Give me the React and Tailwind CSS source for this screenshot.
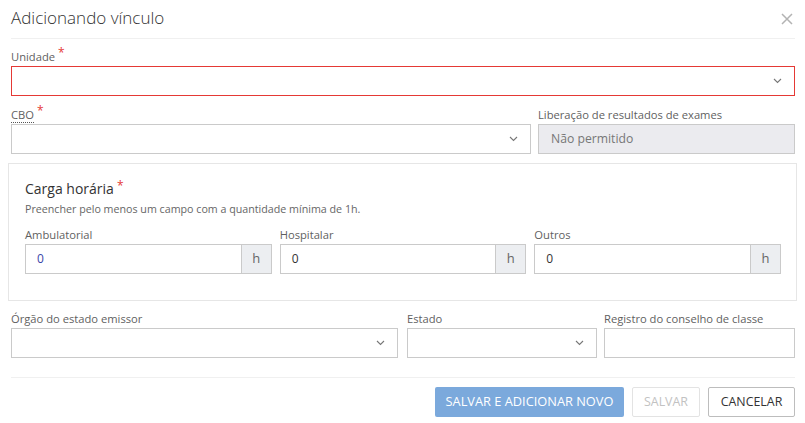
import React from "react";

const Chevron = () => (
  <svg width="9" height="6" viewBox="0 0 9 6" className="shrink-0">
    <path d="M1 1 L4.5 4.5 L8 1" fill="none" stroke="#777" strokeWidth="1.1" />
  </svg>
);

const Star = () => (
  <span className="text-[#e53935] text-[12px] leading-none relative -top-[4px] ml-[3px]">*</span>
);

const Label = ({ children, className = "" }) => (
  <div className={"text-[11.2px] leading-[16px] text-[#5f5f5f] mb-[1px] whitespace-nowrap " + className}>{children}</div>
);

const Select = ({ red }) => (
  <div
    className={
      "h-[30px] flex items-center justify-end pr-[12px] bg-white border " +
      (red ? "border-[#e53935]" : "border-[#cacaca]")
    }
  >
    <Chevron />
  </div>
);

const HourInput = ({ label, blue }) => (
  <div className="flex-1 min-w-0">
    <Label>{label}</Label>
    <div className="h-[30px] flex border border-[#cacaca]">
      <div className={"flex-1 flex items-center pl-[11px] text-[12px] " + (blue ? "text-[#3a44a8]" : "text-[#333]")}>0</div>
      <div className="w-[30px] flex items-center justify-center bg-[#eceef1] border-l border-[#cacaca] text-[13px] text-[#666]">h</div>
    </div>
  </div>
);

export default function App() {
  return (
    <div className="w-[805px] h-[423px] bg-white overflow-hidden" style={{ fontFamily: '"Open Sans", "Liberation Sans", sans-serif' }}>
      <div className="pl-[11px] pr-[10px]">
        <div className="h-[39px] flex items-center justify-between border-b border-[#f0f0f0]">
          <div className="text-[17px] font-light text-[#333] -mt-[3px]">Adicionando vínculo</div>
          <svg width="12" height="12" viewBox="0 0 12 12" className="mr-[2px] -mt-[1px]">
            <path d="M1 1 L11 11 M11 1 L1 11" stroke="#b3b3b3" strokeWidth="1.5" />
          </svg>
        </div>

        <div className="pt-[10px]">
          <Label>Unidade<Star /></Label>
          <Select red />
        </div>

        <div className="mt-[11px] flex gap-[7px]">
          <div className="w-[520px]">
            <Label><span className="border-b border-dotted border-[#555]">CBO</span><Star /></Label>
            <Select />
          </div>
          <div className="flex-1">
            <Label>Liberação de resultados de exames</Label>
            <div className="h-[30px] flex items-center pl-[12px] bg-[#ebebef] border border-[#cacaca] text-[12.2px] text-[#777]">
              Não permitido
            </div>
          </div>
        </div>

        <div className="mt-[9px] -ml-[3px] -mr-[2px] border border-[#e6e6e6] pl-[16px] pr-[15px] pt-[15px] pb-[26px]">
          <div className="text-[14px] leading-[20px] text-[#333]">Carga horária<Star /></div>
          <div className="text-[10.7px] leading-[16px] text-[#666] mt-[2px] mb-[10px]">
            Preencher pelo menos um campo com a quantidade mínima de 1h.
          </div>
          <div className="flex gap-[8px]">
            <HourInput label="Ambulatorial" blue />
            <HourInput label="Hospitalar" />
            <HourInput label="Outros" />
          </div>
        </div>

        <div className="mt-[10px] flex">
          <div className="w-[387px]">
            <Label>Órgão do estado emissor</Label>
            <Select />
          </div>
          <div className="w-[190px] ml-[9px]">
            <Label>Estado</Label>
            <Select />
          </div>
          <div className="flex-1 ml-[7px]">
            <Label>Registro do conselho de classe</Label>
            <div className="h-[30px] bg-white border border-[#cacaca]" />
          </div>
        </div>

        <div className="mt-[19px] border-t border-[#f0f0f0] pt-[9px] flex justify-end gap-[8px]">
          <button className="h-[30px] w-[189px] bg-[#7ba9dc] rounded-[2px] text-white text-[12.8px]">
            SALVAR E ADICIONAR NOVO
          </button>
          <button className="h-[30px] w-[68px] border border-[#e3e3e3] rounded-[2px] text-[#c2c2c2] text-[12.4px]">
            SALVAR
          </button>
          <button className="h-[30px] w-[87px] border border-[#bdbdbd] rounded-[2px] text-[#333] text-[12.4px]">
            CANCELAR
          </button>
        </div>
      </div>
    </div>
  );
}
